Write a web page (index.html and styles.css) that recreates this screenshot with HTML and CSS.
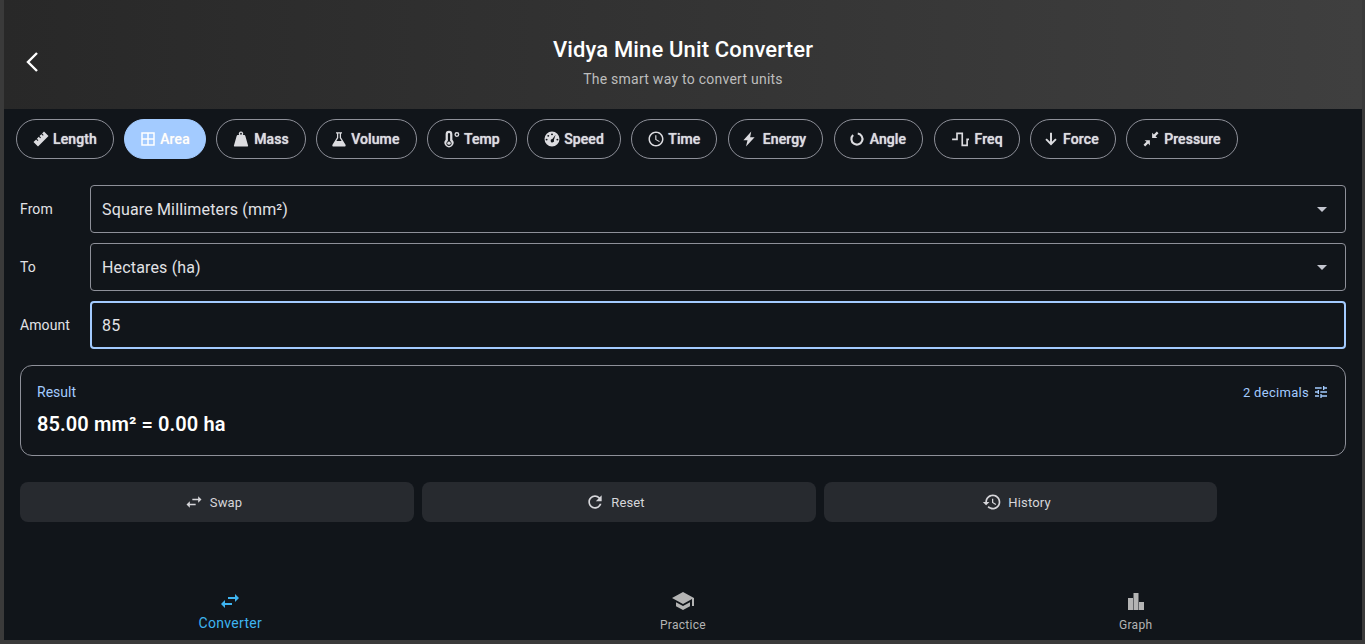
FILE: index.html
```html
<!DOCTYPE html>
<html lang="en">
<head>
  <meta charset="UTF-8">
  <meta name="viewport" content="width=device-width, initial-scale=1.0">
  <title>Vidya Mine Unit Converter</title>
  <link rel="stylesheet" href="styles.css">
</head>
<body>
  <div class="app">
    <header class="top">
      <button class="back" aria-label="Back">
        <svg viewBox="0 0 24 24" width="24" height="24"><path d="M17 3 8 12l9 9" fill="none" stroke="#fff" stroke-width="2.4"/></svg>
      </button>
      <div class="top-title">Vidya Mine Unit Converter</div>
      <div class="top-sub">The smart way to convert units</div>
    </header>

    <div class="chips">
      <div class="chip"><svg viewBox="0 0 24 24"><path d="M16 2 22 8 8 22 2 16 5.500 12.500 7.500 14.500 8.500 13.500 6.500 11.500 9 9 11 11 12 10 10 8 12.500 5.500 14.500 7.500 15.500 6.500 13.500 4.500z"/></svg>Length</div>
      <div class="chip on"><svg class="ic-area" viewBox="0 0 24 24"><path d="M3 3h18v18H3zM5 5v6h6V5zm8 0v6h6V5zM5 13v6h6v-6zm8 0v6h6v-6z"/></svg>Area</div>
      <div class="chip"><svg class="ic-mass" viewBox="0 0 24 24"><path d="M12 2a3 3 0 0 1 2.400 4.800h1.900c.7 0 1.300.5 1.500 1.200L21.500 21c.1.500-.3 1-.8 1H3.300c-.5 0-.9-.5-.8-1L6.200 8c.2-.7.8-1.200 1.500-1.200h1.900A3 3 0 0 1 12 2zm0 1.800a1.200 1.200 0 1 0 0 2.400 1.200 1.200 0 0 0 0-2.400z"/></svg>Mass</div>
      <div class="chip"><svg class="ic-volume" viewBox="0 0 24 24"><path fill-rule="evenodd" d="M8 3h8v1.800h-1.300V10l6 9.500c.6 1-.1 2.500-1.300 2.500H4.600c-1.200 0-1.900-1.500-1.300-2.500l6-9.500V4.800H8zM11 4.800v5.800L8.500 14.500h7L13 10.600V4.800z"/></svg>Volume</div>
      <div class="chip"><svg viewBox="0 0 24 24"><path fill-rule="evenodd" d="M12.500 13V5.500a4.500 4.500 0 0 0-9 0V13a6 6 0 1 0 9 0zM6.500 5.500a1.500 1.500 0 0 1 3 0v9.300a3.500 3.500 0 1 1-3 0z"/><circle cx="8" cy="17.500" r="2.300"/><circle cx="18.500" cy="6" r="2.400" fill="none" stroke="currentColor" stroke-width="1.800"/></svg>Temp</div>
      <div class="chip"><svg viewBox="0 0 24 24"><path fill-rule="evenodd" d="M12 2a10 10 0 1 1 0 20 10 10 0 0 1 0-20zM12 4.500a1.300 1.300 0 1 0 0 2.600 1.300 1.300 0 0 0 0-2.600zM7 6.500a1.300 1.300 0 1 0 0 2.600 1.300 1.300 0 0 0 0-2.600zM4.800 11.500a1.300 1.300 0 1 0 0 2.600 1.300 1.300 0 0 0 0-2.600zM19.200 11.500a1.300 1.300 0 1 0 0 2.600 1.300 1.300 0 0 0 0-2.600zM16.800 6.200 12.500 12a2.300 2.300 0 1 0 2 1.200z"/></svg>Speed</div>
      <div class="chip"><svg viewBox="0 0 24 24"><path d="M11.990 2C6.470 2 2 6.480 2 12s4.470 10 9.990 10C17.520 22 22 17.520 22 12S17.520 2 11.990 2zM12 20c-4.420 0-8-3.580-8-8s3.580-8 8-8 8 3.580 8 8-3.580 8-8 8zm.5-13H11v6l5.250 3.150.75-1.230-4.500-2.670z"/></svg>Time</div>
      <div class="chip"><svg class="ic-energy" viewBox="0 0 24 24"><path d="M15 2 4.500 13.500H10L8 22 19.500 9.500H13.500z"/></svg>Energy</div>
      <div class="chip"><svg class="ic-area" viewBox="0 0 24 24"><path d="M13 4.700a7.400 7.400 0 1 1-6.200 2" fill="none" stroke="currentColor" stroke-width="2.800"/></svg>Angle</div>
      <div class="chip"><svg class="ic-freq" viewBox="0 0 24 24"><path d="M1.500 12.500H8V4.500h7v16h6.500v-8H24" fill="none" stroke="currentColor" stroke-width="2.200"/></svg>Freq</div>
      <div class="chip"><svg class="ic-force" viewBox="0 0 24 24"><path d="M19.500 13 17.700 11.200 13.300 15.600V3.500h-2.600V15.600L6.300 11.200 4.500 13 12 20.500z"/></svg>Force</div>
      <div class="chip"><svg class="ic-pressure" viewBox="0 0 24 24"><path d="M22 4.200 18 8.200 20.500 10.500H13.500V3.500L15.800 6 19.800 2zM2 19.800 6 15.800 3.500 13.500H10.500V20.500L8.200 18 4.200 22z"/></svg>Pressure</div>
    </div>

    <div class="form">
      <div class="row">
        <label class="row-label">From</label>
        <div class="field">Square Millimeters (mm²)<span class="caret"></span></div>
      </div>
      <div class="row">
        <label class="row-label">To</label>
        <div class="field">Hectares (ha)<span class="caret"></span></div>
      </div>
      <div class="row">
        <label class="row-label">Amount</label>
        <div class="field focus">85</div>
      </div>
    </div>

    <section class="result">
      <div class="result-top">
        <span>Result</span>
        <span class="decimals">2 decimals
          <svg viewBox="0 0 24 24" width="16" height="16"><path d="M3 17v2h6v-2H3zM3 5v2h10V5H3zm10 16v-2h8v-2h-8v-2h-2v6h2zM7 9v2H3v2h4v2h2V9H7zm14 4v-2H11v2h10zm-6-4h2V7h4V5h-4V3h-2v6z"/></svg>
        </span>
      </div>
      <div class="result-value">85.00 mm² = 0.00 ha</div>
    </section>

    <div class="actions">
      <button class="action"><svg viewBox="0 0 24 24"><path d="M6.990 11 3 15l3.990 4v-3H14v-2H6.990v-3zM21 9l-3.990-4v3H10v2h7.010v3L21 9z"/></svg>Swap</button>
      <button class="action"><svg viewBox="0 0 24 24"><path d="M17.650 6.350C16.200 4.900 14.210 4 12 4c-4.420 0-7.990 3.580-7.990 8s3.570 8 7.990 8c3.730 0 6.840-2.550 7.730-6h-2.080c-.82 2.330-3.040 4-5.650 4-3.310 0-6-2.690-6-6s2.690-6 6-6c1.660 0 3.140.69 4.220 1.780L13 11h7V4l-2.350 2.350z"/></svg>Reset</button>
      <button class="action"><svg viewBox="0 0 24 24"><path d="M13 3c-4.970 0-9 4.030-9 9H1l3.890 3.890.07.14L9 12H6c0-3.870 3.130-7 7-7s7 3.130 7 7-3.130 7-7 7c-1.930 0-3.680-.79-4.940-2.060l-1.420 1.420C8.270 19.990 10.510 21 13 21c4.970 0 9-4.030 9-9s-4.030-9-9-9zm-1 5v5l4.280 2.540.72-1.210-3.500-2.080V8H12z"/></svg>History</button>
    </div>

    <nav class="tabs">
      <div class="tab active"><svg viewBox="0 0 24 24"><path d="M6.990 11 3 15l3.990 4v-3H14v-2H6.990v-3zM21 9l-3.990-4v3H10v2h7.010v3L21 9z"/></svg><span>Converter</span></div>
      <div class="tab"><svg viewBox="0 0 24 24"><path d="M5 13.180v4L12 21l7-3.820v-4L12 17l-7-3.820zM12 3 1 9l11 6 9-4.910V17h2V9L12 3z"/></svg><span>Practice</span></div>
      <div class="tab"><svg viewBox="0 0 24 24"><path d="M4 9h5v12H4zM9.500 4h5v17h-5zM15 13h5v8h-5z"/></svg><span>Graph</span></div>
    </nav>
  </div>
</body>
</html>
```

FILE: styles.css
```css
* {
  box-sizing: border-box;
}
html, body {
  height: 100%;
}
body {
  margin: 0;
  padding: 0 3px 4px 4px;
  background: #3a3a3a;
  font-family: Roboto, "Liberation Sans", sans-serif;
  color: #e2e2e6;
  overflow: hidden;
}
.app {
  height: 100%;
  background: #11151a;
  display: flex;
  flex-direction: column;
}
button {
  font-family: inherit;
  border: none;
}

.top {
  position: relative;
  height: 109px;
  padding-top: 36px;
  flex-shrink: 0;
  text-align: center;
  background: linear-gradient(to right, #282828, #3f3f3f);
}
.back {
  position: absolute;
  left: 16px;
  top: 50px;
  width: 24px;
  height: 24px;
  padding: 0;
  background: none;
}
.top-title {
  font-size: 22px;
  line-height: 28px;
  font-weight: 500;
  letter-spacing: 0.15px;
  color: #fff;
}
.top-sub {
  margin-top: 5px;
  font-size: 14px;
  line-height: 20px;
  letter-spacing: 0.25px;
  color: #bdbdbd;
}

.chips {
  display: flex;
  gap: 10.4px;
  padding: 10px 12px 0;
}
.chip {
  height: 40px;
  padding: 0 16px 0 15px;
  display: flex;
  align-items: center;
  gap: 3px;
  border: 1px solid #8e9099;
  border-radius: 20px;
  font-size: 14px;
  font-weight: 500;
  letter-spacing: 0.1px;
  color: #dcdce0;
  text-shadow: 0 0 1px #dcdce0;
}
.chip svg {
  width: 18px;
  height: 18px;
  fill: currentColor;
}
/* icons in the source sit in boxes of different widths */
.chip .ic-area { margin: 0 0.5px 0 -1.5px; }
.chip .ic-mass { margin: 0 1px 0 0; }
.chip .ic-volume { margin: 0 0.5px 0 -2.5px; }
.chip .ic-energy { margin: 0 1.5px 0 -3.5px; }
.chip .ic-freq { margin: 0 3px 0 1px; }
.chip .ic-force { margin: 0 0 0 -4px; }
.chip .ic-pressure { margin: 0 1px 0 0; }
.chip.on {
  padding-right: 15px;
  background: #a3cbff;
  border-color: #a3cbff;
  color: #fff;
}

.form {
  padding: 26px 16px 0;
  display: flex;
  flex-direction: column;
  gap: 10px;
}
.row {
  display: flex;
  align-items: center;
}
.row-label {
  width: 70px;
  flex-shrink: 0;
  font-size: 14px;
  letter-spacing: 0.1px;
  color: #e2e2e6;
}
.field {
  flex: 1;
  height: 48px;
  padding: 0 12px 0 11px;
  display: flex;
  align-items: center;
  justify-content: space-between;
  border: 1px solid #8e9099;
  border-radius: 4px;
  font-size: 16px;
  letter-spacing: 0.16px;
  color: #e2e2e6;
}
.field.focus {
  border: 2px solid #a3cbff;
  padding-left: 10px;
}
.caret {
  width: 0;
  height: 0;
  margin-right: 6px;
  border-left: 5px solid transparent;
  border-right: 5px solid transparent;
  border-top: 5px solid #c4c6cf;
}

.result {
  margin: 16px 16px 0;
  height: 91px;
  padding: 16px;
  border: 1px solid #8e9099;
  border-radius: 12px;
}
.result-top {
  display: flex;
  justify-content: space-between;
  align-items: center;
  height: 20px;
  font-size: 14px;
  color: #a3cbff;
}
.decimals {
  display: flex;
  align-items: center;
  gap: 4px;
  font-size: 13px;
  letter-spacing: 0.3px;
}
.decimals svg {
  fill: #a3cbff;
}
.result-value {
  margin-top: 8px;
  font-size: 20px;
  line-height: 28px;
  font-weight: 600;
  letter-spacing: 0.1px;
  color: #fff;
}

.actions {
  margin: 26px 16px 0;
  display: grid;
  grid-template-columns: 394px 394px 393px;
  gap: 8px;
}
.action {
  height: 40px;
  padding: 0 8px 0 0;
  display: flex;
  align-items: center;
  justify-content: center;
  gap: 6px;
  background: #272a2f;
  border-radius: 8px;
  font-size: 13px;
  letter-spacing: 0.15px;
  color: #d6d6da;
}
.action svg {
  width: 20px;
  height: 20px;
  fill: currentColor;
}

.tabs {
  margin-top: auto;
  height: 56px;
  padding-top: 5px;
  display: grid;
  grid-template-columns: repeat(3, 1fr);
}
.tab {
  display: flex;
  flex-direction: column;
  align-items: center;
  font-size: 12px;
  line-height: 16px;
  letter-spacing: 0.3px;
  color: #b4b4b4;
}
.tab svg {
  width: 24px;
  height: 24px;
  fill: currentColor;
  margin-bottom: 4px;
}
.tab.active {
  color: #3eb4f0;
  font-size: 14px;
  line-height: 20px;
}
.tab.active svg {
  margin-bottom: 0;
}
```
